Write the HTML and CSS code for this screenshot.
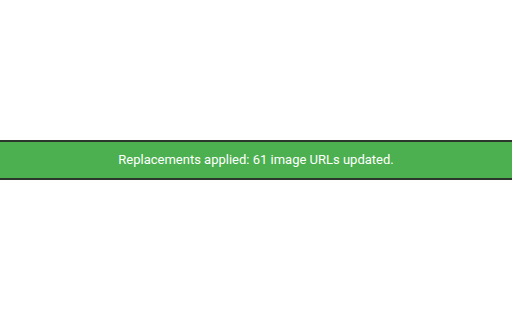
FILE: index.html
```html
<!DOCTYPE html>
<html>
<head>
<meta charset="utf-8">
<link rel="stylesheet" href="styles.css">
</head>
<body>
<div class="page">
  <div class="toast">Replacements applied: 61 image URLs updated.</div>
</div>
</body>
</html>
```
FILE: styles.css
```css
html, body {
  margin: 0;
  padding: 0;
  background: #ffffff;
}
.page {
  height: 320px;
  display: flex;
  flex-direction: column;
  justify-content: center;
}
.toast {
  background: #4caf50;
  color: #ffffff;
  font-family: Roboto, "Liberation Sans", Arial, sans-serif;
  font-size: 13px;
  line-height: 16px;
  text-align: center;
  padding: 10px 0;
  border-top: 2px solid #2b352b;
  border-bottom: 2px solid #2b352b;
}
```
